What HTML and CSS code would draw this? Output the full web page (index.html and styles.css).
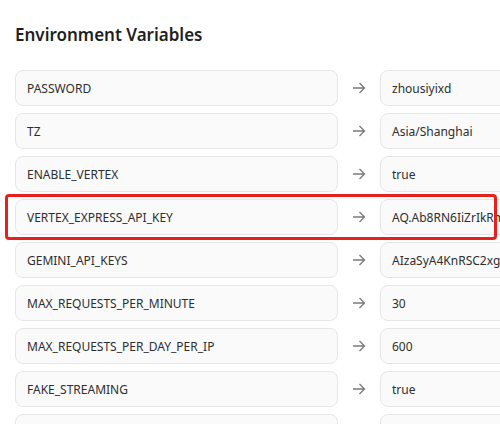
FILE: index.html
```html
<!DOCTYPE html>
<html>
<head>
<meta charset="utf-8">
<link rel="stylesheet" href="styles.css">
</head>
<body>
<div class="page">
  <h2 class="title">Environment Variables</h2>
  <div class="list">
    <div class="row"><div class="field">PASSWORD</div><div class="arrow"><svg width="14" height="14" viewBox="0 0 14 14"><path d="M1 7h11.5M7.5 2l5 5-5 5" fill="none" stroke="#7a7a7a" stroke-width="1.3"/></svg></div><div class="field">zhousiyixd</div></div>
    <div class="row"><div class="field">TZ</div><div class="arrow"><svg width="14" height="14" viewBox="0 0 14 14"><path d="M1 7h11.5M7.5 2l5 5-5 5" fill="none" stroke="#7a7a7a" stroke-width="1.3"/></svg></div><div class="field">Asia/Shanghai</div></div>
    <div class="row"><div class="field">ENABLE_VERTEX</div><div class="arrow"><svg width="14" height="14" viewBox="0 0 14 14"><path d="M1 7h11.5M7.5 2l5 5-5 5" fill="none" stroke="#7a7a7a" stroke-width="1.3"/></svg></div><div class="field">true</div></div>
    <div class="row highlighted"><div class="field">VERTEX_EXPRESS_API_KEY</div><div class="arrow"><svg width="14" height="14" viewBox="0 0 14 14"><path d="M1 7h11.5M7.5 2l5 5-5 5" fill="none" stroke="#7a7a7a" stroke-width="1.3"/></svg></div><div class="field">AQ.Ab8RN6IiZrIkRmX0wQpLs</div><div class="mark"></div></div>
    <div class="row"><div class="field">GEMINI_API_KEYS</div><div class="arrow"><svg width="14" height="14" viewBox="0 0 14 14"><path d="M1 7h11.5M7.5 2l5 5-5 5" fill="none" stroke="#7a7a7a" stroke-width="1.3"/></svg></div><div class="field">AIzaSyA4KnRSC2xgPq7vLm</div></div>
    <div class="row"><div class="field">MAX_REQUESTS_PER_MINUTE</div><div class="arrow"><svg width="14" height="14" viewBox="0 0 14 14"><path d="M1 7h11.5M7.5 2l5 5-5 5" fill="none" stroke="#7a7a7a" stroke-width="1.3"/></svg></div><div class="field">30</div></div>
    <div class="row"><div class="field">MAX_REQUESTS_PER_DAY_PER_IP</div><div class="arrow"><svg width="14" height="14" viewBox="0 0 14 14"><path d="M1 7h11.5M7.5 2l5 5-5 5" fill="none" stroke="#7a7a7a" stroke-width="1.3"/></svg></div><div class="field">600</div></div>
    <div class="row"><div class="field">FAKE_STREAMING</div><div class="arrow"><svg width="14" height="14" viewBox="0 0 14 14"><path d="M1 7h11.5M7.5 2l5 5-5 5" fill="none" stroke="#7a7a7a" stroke-width="1.3"/></svg></div><div class="field">true</div></div>
    <div class="row"><div class="field"></div><div class="arrow"></div><div class="field"></div></div>
  </div>
</div>
</body>
</html>
```
FILE: styles.css
```css
html, body {
  margin: 0;
  padding: 0;
  background: #ffffff;
  overflow: hidden;
  width: 500px;
  height: 424px;
}
.page {
  padding: 0 0 0 15px;
  font-family: "Noto Sans", "Open Sans", sans-serif;
  color: #2b2b2b;
  width: 700px;
}
.title {
  margin: 0;
  padding-top: 23px;
  height: 70px;
  font-size: 17px;
  font-weight: 600;
  line-height: 24px;
  color: #1f1f1f;
  box-sizing: border-box;
}
.list {
  display: flex;
  flex-direction: column;
  gap: 7px;
}
.row {
  position: relative;
  display: grid;
  grid-template-columns: 323px 42px 323px;
  align-items: center;
}
.field {
  height: 36px;
  box-sizing: border-box;
  border: 1px solid #e6e6e6;
  border-radius: 8px;
  background: #fafafa;
  padding: 0 11px;
  display: flex;
  align-items: center;
  font-size: 12px;
  color: #2e2e2e;
  white-space: nowrap;
  overflow: hidden;
}
.arrow {
  display: flex;
  justify-content: center;
  align-items: center;
  height: 36px;
}
.mark {
  position: absolute;
  left: -10px;
  top: -5px;
  width: 492px;
  height: 46px;
  box-sizing: border-box;
  border: 3px solid #e8201c;
  border-radius: 4px;
  pointer-events: none;
}
```
